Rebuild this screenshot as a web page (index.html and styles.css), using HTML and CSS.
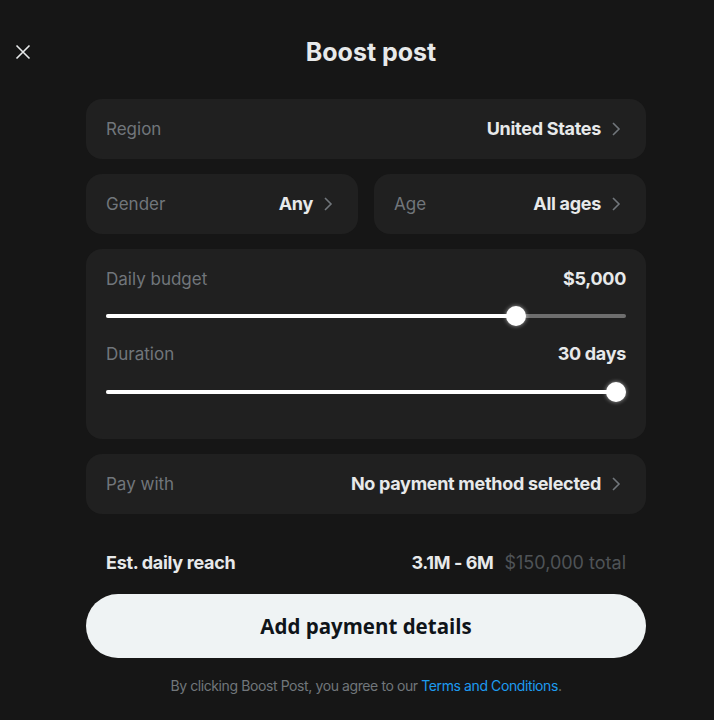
FILE: index.html
```html
<!DOCTYPE html>
<html lang="en">
<head>
<meta charset="utf-8">
<title>Boost post</title>
<link rel="stylesheet" href="styles.css">
</head>
<body>
<div class="modal">
  <header class="header">
    <button class="close" aria-label="Close">
      <svg viewBox="0 0 16 16" width="16" height="16"><path d="M1.5 1.5 L14.5 14.5 M14.5 1.5 L1.5 14.5" stroke="#e7e9ea" stroke-width="1.6" fill="none"/></svg>
    </button>
    <h1 class="title">Boost post</h1>
  </header>

  <main class="content">
    <div class="card row">
      <span class="label">Region</span>
      <span class="value">United States<svg class="chev" viewBox="0 0 10 16"><path d="M2 2 L8 8 L2 14" stroke="#71767b" stroke-width="1.6" fill="none"/></svg></span>
    </div>

    <div class="pair">
      <div class="card row">
        <span class="label">Gender</span>
        <span class="value">Any<svg class="chev" viewBox="0 0 10 16"><path d="M2 2 L8 8 L2 14" stroke="#71767b" stroke-width="1.6" fill="none"/></svg></span>
      </div>
      <div class="card row">
        <span class="label">Age</span>
        <span class="value">All ages<svg class="chev" viewBox="0 0 10 16"><path d="M2 2 L8 8 L2 14" stroke="#71767b" stroke-width="1.6" fill="none"/></svg></span>
      </div>
    </div>

    <div class="card sliders">
      <div class="slider-head">
        <span class="label">Daily budget</span>
        <span class="value">$5,000</span>
      </div>
      <div class="slider" style="--v:0.8">
        <div class="track"></div>
        <div class="fill"></div>
        <div class="thumb"></div>
      </div>
      <div class="slider-head second">
        <span class="label">Duration</span>
        <span class="value">30 days</span>
      </div>
      <div class="slider" style="--v:1">
        <div class="track"></div>
        <div class="fill"></div>
        <div class="thumb"></div>
      </div>
    </div>

    <div class="card row">
      <span class="label">Pay with</span>
      <span class="value">No payment method selected<svg class="chev" viewBox="0 0 10 16"><path d="M2 2 L8 8 L2 14" stroke="#71767b" stroke-width="1.6" fill="none"/></svg></span>
    </div>

    <div class="reach">
      <span class="reach-label">Est. daily reach</span>
      <span class="reach-values"><strong>3.1M - 6M</strong><span class="total">$150,000 total</span></span>
    </div>

    <button class="cta">Add payment details</button>

    <p class="terms">By clicking Boost Post, you agree to our <a href="#">Terms and Conditions</a>.</p>
  </main>
</div>
</body>
</html>
```

FILE: styles.css
```css
* { box-sizing: border-box; }
html, body {
  margin: 0;
  padding: 0;
  background: #161616;
}
body {
  font-family: Inter, "Noto Sans", "Liberation Sans", sans-serif;
  color: #e7e9ea;
  width: 714px;
  height: 720px;
  overflow: hidden;
}
.header {
  height: 99px;
  display: flex;
  align-items: center;
  padding-top: 4px;
}
.close {
  width: 46px;
  height: 46px;
  background: none;
  border: none;
  padding: 0;
  display: flex;
  align-items: center;
  justify-content: center;
  cursor: pointer;
}
.title {
  flex: 1;
  margin: 0;
  padding-right: 18px;
  text-align: center;
  font-size: 25px;
  font-weight: 700;
  letter-spacing: 0;
  color: #e7e9ea;
}
.content {
  margin-left: 86px;
  width: 560px;
  display: flex;
  flex-direction: column;
  gap: 15px;
}
.card {
  background: #202020;
  border-radius: 16px;
}
.row {
  height: 60px;
  padding: 0 25px 0 20px;
  display: flex;
  align-items: center;
  justify-content: space-between;
}
.pair {
  display: grid;
  grid-template-columns: 1fr 1fr;
  gap: 16px;
}
.label {
  color: #71767b;
  font-size: 17px;
  letter-spacing: 0;
}
.value {
  display: flex;
  align-items: center;
  font-size: 18px;
  font-weight: 700;
  letter-spacing: -0.3px;
  color: #e7e9ea;
  margin-top: -1px;
}
.chev {
  width: 10px;
  height: 16px;
  margin-left: 10px;
}
.sliders {
  height: 190px;
  padding: 20px 20px 0;
}
.slider-head {
  display: flex;
  justify-content: space-between;
  align-items: center;
  height: 20px;
}
.slider-head.second {
  margin-top: 16px;
}
.slider {
  position: relative;
  height: 24px;
  margin-top: 15px;
}
.slider-head.second + .slider {
  margin-top: 16px;
}
.track {
  position: absolute;
  left: 0;
  right: 0;
  top: 10px;
  height: 4px;
  border-radius: 2px;
  background: #6e6e6e;
}
.fill {
  position: absolute;
  left: 0;
  top: 10px;
  height: 4px;
  border-radius: 2px;
  background: #ffffff;
  width: calc(10px + var(--v) * (100% - 20px));
}
.thumb {
  position: absolute;
  top: 2px;
  width: 20px;
  height: 20px;
  border-radius: 50%;
  background: #ffffff;
  box-shadow: 0 0 4px rgba(255, 255, 255, 0.6);
  left: calc(var(--v) * (100% - 20px));
}
.reach {
  margin-top: 21px;
  padding: 0 20px;
  height: 24px;
  display: flex;
  align-items: center;
  justify-content: space-between;
  font-size: 18px;
}
.reach-label {
  font-weight: 700;
  letter-spacing: -0.3px;
}
.reach-values strong {
  font-weight: 700;
  letter-spacing: -0.4px;
}
.total {
  color: #4f5357;
  margin-left: 11px;
  letter-spacing: 0;
}
.cta {
  margin-top: 5px;
  height: 64px;
  border: none;
  border-radius: 32px;
  background: #eff3f4;
  color: #0f1419;
  font-family: "Open Sans", "Noto Sans", sans-serif;
  font-size: 20.5px;
  font-weight: 700;
  cursor: pointer;
}
.terms {
  margin: 3px 0 0;
  text-align: center;
  font-size: 14px;
  line-height: 20px;
  color: #71767b;
  letter-spacing: -0.4px;
}
.terms a {
  color: #1d9bf0;
  text-decoration: none;
}
```
